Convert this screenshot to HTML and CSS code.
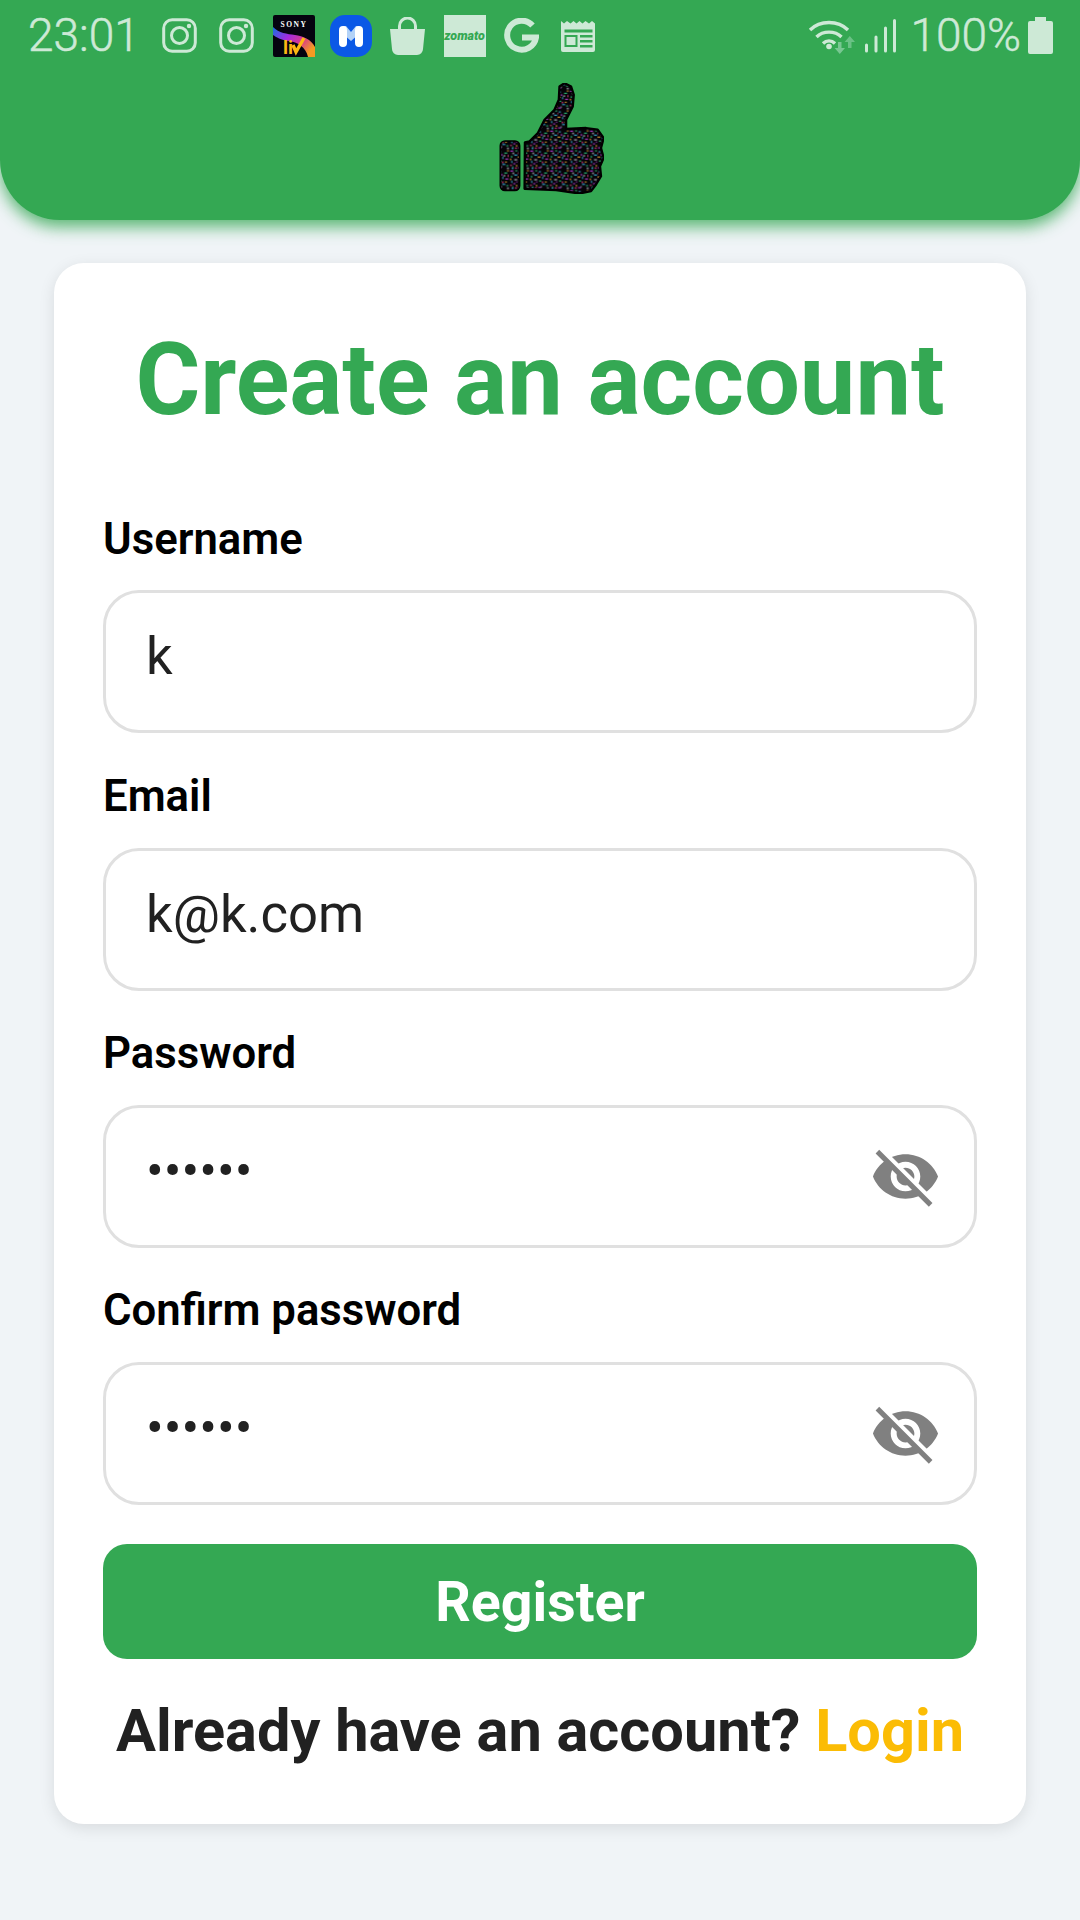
FILE: index.html
```html
<!DOCTYPE html>
<html lang="en">
<head>
<meta charset="utf-8">
<title>Create an account</title>
<link rel="stylesheet" href="styles.css">
</head>
<body>
<header class="app-header">
  <div class="status-bar">
    <div class="status-left">
      <span class="clock">23:01</span>
      <div class="notif-icons">
        <span class="notif"><svg class="ic-35" viewBox="0 0 35 35"><rect x="1.700" y="1.700" width="31.600" height="31.600" rx="8.500" fill="none" stroke="#cde9d6" stroke-width="3"/><circle cx="17.500" cy="17.500" r="8" fill="none" stroke="#cde9d6" stroke-width="3"/><circle cx="27" cy="8" r="2.200" fill="#cde9d6"/></svg></span>
        <span class="notif"><svg class="ic-35" viewBox="0 0 35 35"><rect x="1.700" y="1.700" width="31.600" height="31.600" rx="8.500" fill="none" stroke="#cde9d6" stroke-width="3"/><circle cx="17.500" cy="17.500" r="8" fill="none" stroke="#cde9d6" stroke-width="3"/><circle cx="27" cy="8" r="2.200" fill="#cde9d6"/></svg></span>
        <span class="notif"><svg class="ic-42" viewBox="0 0 42 42"><defs><linearGradient id="liv" x1="0" y1="0" x2="1" y2="0.6"><stop offset="0" stop-color="#1274e0"/><stop offset=".4" stop-color="#a32be0"/><stop offset=".72" stop-color="#d93a8c"/><stop offset="1" stop-color="#f59a23"/></linearGradient></defs><rect width="42" height="42" rx="2" fill="#05030f"/><path d="M0 12C6 18 14 19 22 20S38 24 42 32V42H35C33 32 24 27 16 26S3 22 0 20z" fill="url(#liv)"/><text class="sony" x="21" y="12">SONY</text><text class="liv" x="10" y="39">li</text><path d="M20 30l3 7 8-14" fill="none" stroke="#fdb813" stroke-width="3.400"/></svg></span>
        <span class="notif"><svg class="ic-42" viewBox="0 0 42 42"><rect width="42" height="42" rx="15" fill="#0b58e6"/><path d="M13 11h3l5 6 5-6h3v8l-8 7-8-7z" fill="#b3d2f7"/><path d="M9 15a4 4 0 0 1 8 0v13a4 4 0 0 1-8 0zM25 15a4 4 0 0 1 8 0v13a4 4 0 0 1-8 0z" fill="#fff"/></svg></span>
        <span class="notif"><svg class="ic-bag" viewBox="0 0 35 38"><path d="M0 12h35l-2 20a6 6 0 0 1-6 6H8a6 6 0 0 1-6-6z" fill="#cde9d6"/><path d="M9.500 14V9a8 8 0 0 1 16 0v5" fill="none" stroke="#cde9d6" stroke-width="3"/></svg></span>
        <span class="notif"><span class="zomato">zomato</span></span>
        <span class="notif"><svg class="ic-35" viewBox="0 0 35 35"><path d="M28.500 7.500A14.500 14.500 0 1 0 32 19.500H18" fill="none" stroke="#cde9d6" stroke-width="6"/></svg></span>
        <span class="notif"><svg class="ic-news" viewBox="0 0 35 32"><path d="M0 1l3 2.500 3-2.500 3.500 2.500 3-2.500 3 2.500 3-2.500 3 2.500 3-2.500 3.500 2.500 3-2.500 3 2.500V30a2 2 0 0 1-2 2H2a2 2 0 0 1-2-2z" fill="#cde9d6"/><path d="M3.500 9.500h28v3h-28zM3.500 15h13v12h-13zM19 15h12.500v2.500H19zM19 20h12.500v2.500H19zM19 25h12.500v2.500H19z" fill="#34a853"/><path d="M5.500 17h9v8h-9z" fill="#cde9d6"/></svg></span>
      </div>
    </div>
    <div class="status-right">
      <svg class="ic-wifi" viewBox="0 0 48 36"><path d="M2 12C12 2 30 2 40 12M8.500 19C15 12.500 27 12.500 33.500 19M15 25.500c3.500-3.500 8.500-3.500 12 0" fill="none" stroke="#cde9d6" stroke-width="3.400"/><circle cx="21" cy="28.500" r="2.800" fill="#cde9d6"/><path d="M30 24h3.500v6H37l-5.200 6-5.200-6H30z" fill="#78c792"/><path d="M40 30h3.500v-6H47l-5.200-6-5.200 6H40z" fill="#78c792" opacity=".8"/></svg>
      <svg class="ic-signal" viewBox="0 0 31 34"><path d="M1.500 26v6M11 18v14M20.500 9v23M29.500 1.500v30.500" fill="none" stroke="#cde9d6" stroke-width="3" stroke-linecap="round"/></svg>
      <span class="battery-text">100%</span>
      <svg class="ic-battery" viewBox="0 0 25 37"><path d="M7 0h11v4h5a2 2 0 0 1 2 2v29a2 2 0 0 1-2 2H2a2 2 0 0 1-2-2V6a2 2 0 0 1 2-2h5z" fill="#cde9d6"/></svg>
    </div>
  </div>
  <div class="logo-row">
    <svg class="thumb" viewBox="88 40 316 333">
      <defs>
        <pattern id="noise" patternUnits="userSpaceOnUse" width="60" height="60">
          <rect width="60" height="60" fill="#050308"/>
          <g fill="#c040e0"><rect x="2" y="3" width="9" height="3"/><rect x="33" y="14" width="6" height="3"/><rect x="47" y="27" width="9" height="3"/><rect x="11" y="41" width="6" height="3"/><rect x="26" y="53" width="9" height="3"/><rect x="20" y="36" width="3" height="3"/></g>
          <g fill="#30d080"><rect x="17" y="2" width="6" height="3"/><rect x="44" y="9" width="9" height="3"/><rect x="3" y="20" width="6" height="3"/><rect x="29" y="33" width="6" height="3"/><rect x="50" y="47" width="6" height="3"/><rect x="8" y="50" width="3" height="3"/></g>
          <g fill="#40c0f0"><rect x="28" y="5" width="6" height="3"/><rect x="14" y="15" width="9" height="3"/><rect x="38" y="22" width="3" height="6"/><rect x="5" y="34" width="3" height="6"/><rect x="38" y="43" width="9" height="3"/><rect x="6" y="55" width="6" height="3"/></g>
          <g fill="#e0a030"><rect x="52" y="2" width="6" height="3"/><rect x="24" y="21" width="9" height="3"/><rect x="46" y="36" width="6" height="3"/><rect x="18" y="47" width="6" height="3"/><rect x="0" y="28" width="6" height="3"/></g>
          <g fill="#d0d0e0"><rect x="8" y="10" width="6" height="3"/><rect x="41" y="17" width="6" height="3"/><rect x="14" y="29" width="9" height="3"/><rect x="34" y="50" width="3" height="3"/><rect x="52" y="55" width="6" height="3"/></g>
          <g fill="#e04080"><rect x="24" y="10" width="3" height="3"/><rect x="54" y="16" width="3" height="6"/><rect x="36" y="37" width="6" height="3"/><rect x="1" y="46" width="6" height="3"/><rect x="16" y="54" width="6" height="3"/></g>
        </pattern>
      </defs>
      <rect x="92" y="214" width="58" height="149" rx="14" fill="url(#noise)" stroke="#000" stroke-width="5"/>
      <path d="M166 218l14-3 25-25 20-40 30-30 13-30 2-40 15-10 20 10 8 25-3 35-20 40v28l60-3 35 5 18 25-8 30 8 30-11 25 3 30-15 25-15 20-35 7-70-10-95-4z" fill="url(#noise)" stroke="#000" stroke-width="7" stroke-linejoin="round"/>
    </svg>
  </div>
</header>

<main class="card">
  <h1 class="title">Create an account</h1>

  <div class="field">
    <div class="label">Username</div>
    <div class="input">k</div>
  </div>
  <div class="field">
    <div class="label">Email</div>
    <div class="input">k@k.com</div>
  </div>
  <div class="field">
    <div class="label">Password</div>
    <div class="input">••••••
      <svg class="eye" viewBox="0 0 24 24"><path d="M12 4.500C7 4.500 2.730 7.610 1 12c1.730 4.390 6 7.500 11 7.500s9.270-3.110 11-7.500c-1.730-4.390-6-7.500-11-7.500zM12 17c-2.760 0-5-2.240-5-5s2.240-5 5-5 5 2.240 5 5-2.240 5-5 5zm0-8c-1.660 0-3 1.340-3 3s1.340 3 3 3 3-1.340 3-3-1.340-3-3-3z" fill="#808080"/><path d="M3.500 2.600L21.500 20.600" stroke="#fff" stroke-width="1.600"/><path d="M2.500 3.600L20.500 21.600" stroke="#808080" stroke-width="1.700"/></svg>
    </div>
  </div>
  <div class="field">
    <div class="label">Confirm password</div>
    <div class="input">••••••
      <svg class="eye" viewBox="0 0 24 24"><path d="M12 4.500C7 4.500 2.730 7.610 1 12c1.730 4.390 6 7.500 11 7.500s9.270-3.110 11-7.500c-1.730-4.390-6-7.500-11-7.500zM12 17c-2.760 0-5-2.240-5-5s2.240-5 5-5 5 2.240 5 5-2.240 5-5 5zm0-8c-1.660 0-3 1.340-3 3s1.340 3 3 3 3-1.340 3-3-1.340-3-3-3z" fill="#808080"/><path d="M3.500 2.600L21.500 20.600" stroke="#fff" stroke-width="1.600"/><path d="M2.500 3.600L20.500 21.600" stroke="#808080" stroke-width="1.700"/></svg>
    </div>
  </div>

  <button class="register" type="button">Register</button>
  <p class="footer-text">Already have an account? <a class="login">Login</a></p>
</main>
</body>
</html>
```
FILE: styles.css
```css
* { box-sizing: border-box; }

html, body { margin: 0; padding: 0; }

body {
  width: 1080px;
  height: 1920px;
  background: #f0f4f7;
  font-family: Roboto, "Noto Sans", sans-serif;
  overflow: hidden;
}

.app-header {
  height: 220px;
  background: #34a853;
  border-radius: 0 0 60px 60px;
  box-shadow: 0 7px 16px rgba(52, 168, 83, .8);
}

.status-bar {
  height: 70px;
  padding: 14px 27px 0 28px;
  display: flex;
  justify-content: space-between;
  align-items: flex-start;
  color: #cde9d6;
}

.status-left { display: flex; align-items: center; height: 43px; }

.clock {
  width: 123px;
  font-size: 46px;
  line-height: 43px;
  font-weight: 300;
  -webkit-text-stroke: .5px #cde9d6;
  white-space: nowrap;
}

.notif-icons { display: grid; grid-template-columns: repeat(8, 57px); }

.notif {
  height: 43px;
  display: flex;
  align-items: center;
  justify-content: center;
}

.ic-35 { width: 35px; height: 35px; }
.ic-42 { width: 42px; height: 42px; overflow: visible; }
.ic-bag { width: 35px; height: 38px; }
.ic-news { width: 35px; height: 32px; }

.sony {
  font: 700 7.500px "Liberation Serif", serif;
  fill: #fff;
  text-anchor: middle;
  letter-spacing: 1.600px;
}

.liv {
  font: 700 19px Roboto, sans-serif;
  fill: #fdb813;
}

.zomato {
  width: 42px;
  height: 42px;
  background: #cde9d6;
  color: #34a853;
  font: italic 900 12.500px/42px Roboto, sans-serif;
  text-align: center;
}

.status-right { display: flex; align-items: center; height: 43px; }

.ic-wifi { width: 48px; height: 36px; margin-right: 9px; }
.ic-signal { width: 31px; height: 34px; margin-right: 14.500px; }

.battery-text {
  font-size: 46px;
  line-height: 43px;
  font-weight: 300;
  -webkit-text-stroke: .5px #cde9d6;
  margin-right: 7px;
  white-space: nowrap;
}

.ic-battery { width: 25px; height: 37px; }

.logo-row { display: flex; justify-content: center; padding-top: 13px; padding-left: 22px; }

.thumb { width: 105px; height: 111px; display: block; }

.card {
  margin: 43px 54px 0;
  height: 1561px;
  padding: 77px 49px 0;
  background: #fff;
  border-radius: 30px;
  box-shadow: 0 4px 16px rgba(0, 0, 0, .1);
}

.title {
  margin: 0 0 56px;
  color: #34a853;
  font-size: 99.200px;
  line-height: 80px;
  font-weight: 700;
  text-align: center;
  white-space: nowrap;
}

.label {
  height: 114.300px;
  padding-top: 37.500px;
  font-size: 43.700px;
  line-height: 50px;
  font-weight: 600;
  color: #000;
}

.input {
  position: relative;
  height: 143px;
  padding: 0 40px;
  border: 3px solid #e0e0e0;
  border-radius: 36px;
  font-size: 52.600px;
  line-height: 127px;
  color: #212121;
}

.eye {
  position: absolute;
  right: 33px;
  top: 33px;
  width: 71px;
  height: 71px;
}

.register {
  display: block;
  width: 100%;
  height: 115px;
  margin-top: 39px;
  border: 0;
  border-radius: 24px;
  background: #34a853;
  color: #fff;
  font: 700 55.500px/115px Roboto, sans-serif;
}

.footer-text {
  margin: 38px 0 0;
  font-size: 59.500px;
  line-height: 68px;
  font-weight: 700;
  color: #212121;
  text-align: center;
  white-space: nowrap;
}

.login { color: #fbbc05; }
```
